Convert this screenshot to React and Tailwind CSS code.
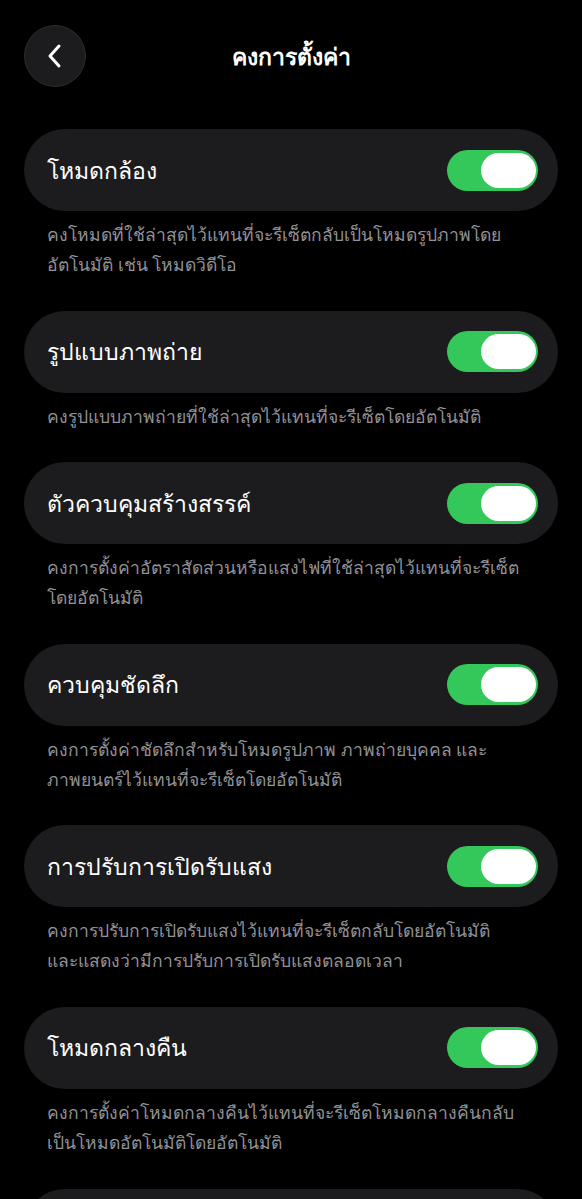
import React from "react";

const items = [
  {
    title: "โหมดกล้อง",
    desc: ["คงโหมดที่ใช้ล่าสุดไว้แทนที่จะรีเซ็ตกลับเป็นโหมดรูปภาพโดย", "อัตโนมัติ เช่น โหมดวิดีโอ"],
  },
  {
    title: "รูปแบบภาพถ่าย",
    desc: ["คงรูปแบบภาพถ่ายที่ใช้ล่าสุดไว้แทนที่จะรีเซ็ตโดยอัตโนมัติ"],
  },
  {
    title: "ตัวควบคุมสร้างสรรค์",
    desc: ["คงการตั้งค่าอัตราสัดส่วนหรือแสงไฟที่ใช้ล่าสุดไว้แทนที่จะรีเซ็ต", "โดยอัตโนมัติ"],
  },
  {
    title: "ควบคุมชัดลึก",
    desc: ["คงการตั้งค่าชัดลึกสำหรับโหมดรูปภาพ ภาพถ่ายบุคคล และ", "ภาพยนตร์ไว้แทนที่จะรีเซ็ตโดยอัตโนมัติ"],
  },
  {
    title: "การปรับการเปิดรับแสง",
    desc: ["คงการปรับการเปิดรับแสงไว้แทนที่จะรีเซ็ตกลับโดยอัตโนมัติ", "และแสดงว่ามีการปรับการเปิดรับแสงตลอดเวลา"],
  },
  {
    title: "โหมดกลางคืน",
    desc: ["คงการตั้งค่าโหมดกลางคืนไว้แทนที่จะรีเซ็ตโหมดกลางคืนกลับ", "เป็นโหมดอัตโนมัติโดยอัตโนมัติ"],
  },
];

const Toggle = () => (
  <div className="w-[91px] h-[41px] rounded-full bg-[#34c759] flex items-center justify-end pr-[2px]">
    <div className="w-[55px] h-[35px] rounded-full bg-white" />
  </div>
);

export default function App() {
  return (
    <div
      className="w-[582px] h-[1199px] bg-black text-white overflow-hidden"
      style={{ fontFamily: '"Noto Sans", "DejaVu Sans", sans-serif' }}
    >
      <header className="relative h-[113px] flex items-center justify-center pb-[1px]">
        <button className="absolute left-[24px] top-[25px] w-[62px] h-[62px] rounded-full bg-[#1c1c1e] border border-[#2c2c2e] flex items-center justify-center">
          <svg width="22" height="26" viewBox="0 0 22 26" fill="none">
            <path d="M15 3 L6 13 L15 23" stroke="white" strokeWidth="3" strokeLinecap="round" strokeLinejoin="round" />
          </svg>
        </button>
        <h1 className="text-[23px] font-bold">คงการตั้งค่า</h1>
      </header>

      <div className="px-[24px] pt-[16px] flex flex-col">
        {items.map((it) => (
          <div key={it.title} className="flex flex-col">
            <div className="h-[82px] rounded-full bg-[#1c1c1e] flex items-center justify-between pl-[23px] pr-[20px]">
              <span className="text-[23px] leading-none">{it.title}</span>
              <Toggle />
            </div>
            <div className="pl-[23px] pt-[8px] pb-[31.6px] text-[17.5px] leading-[30px] text-[#929297]">
              {it.desc.map((d) => (
                <div key={d}>{d}</div>
              ))}
            </div>
          </div>
        ))}
        <div className="h-[82px] rounded-t-[41px] bg-[#1c1c1e]" />
      </div>
    </div>
  );
}
